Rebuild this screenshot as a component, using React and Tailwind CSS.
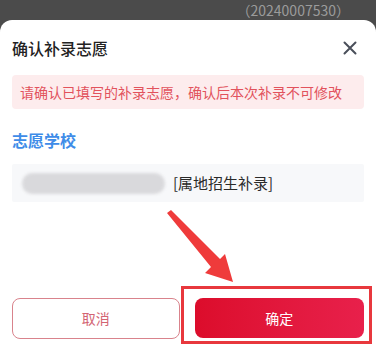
export default function App() {
  return (
    <div
      className="relative w-[376px] h-[347px] overflow-hidden bg-[#4b4b4b]"
      style={{ fontFamily: '"Noto Sans CJK SC", "Noto Sans", sans-serif' }}
    >
      {/* top strip behind the sheet */}
      <div className="h-[20px] flex justify-end pr-[26px]">
        <span className="text-[14px] leading-[20px] text-[#9b9b9b]">（20240007530）</span>
      </div>

      {/* SHEET */}
      <div className="h-[327px] bg-white rounded-t-[12px] px-[12px] flex flex-col">
        {/* HEADER */}
        <div className="h-[55px] flex items-center justify-between">
          <span className="text-[16px] font-medium text-[#222]">确认补录志愿</span>
          <svg width="14" height="14" viewBox="0 0 14 14" className="mr-[7px]">
            <path d="M1.5 1.5 L12.5 12.5 M12.5 1.5 L1.5 12.5" stroke="#4a4f5a" strokeWidth="2" strokeLinecap="round" />
          </svg>
        </div>

        {/* ALERT */}
        <div className="h-[34px] rounded-[4px] bg-[#fdeced] flex items-center px-[8px]">
          <span className="text-[14px] text-[#e2525c] whitespace-nowrap">请确认已填写的补录志愿，确认后本次补录不可修改</span>
        </div>

        {/* SCHOOL */}
        <div className="mt-[19px] h-[24px] flex items-center text-[16px] font-bold text-[#3e8ce8]">志愿学校</div>
        <div className="mt-[12px] h-[38px] bg-[#f7f8fa] rounded-[2px] flex items-center pl-[10px]">
          <div className="w-[143px] h-[21px] rounded-full bg-[#d9d9dc] blur-[1.5px]" />
          <span className="ml-[8px] text-[15px] text-[#2a2a2a]">[属地招生补录]</span>
        </div>

        {/* FOOTER */}
        <div className="mt-[96px] flex gap-[15px]">
          <button className="w-[168px] h-[41px] rounded-[8px] border border-[#d9838c] text-[14px] text-[#d36473] bg-white">
            取消
          </button>
          <button className="w-[170px] h-[40px] rounded-[8px] text-[14px] text-white bg-gradient-to-r from-[#dc0c2b] to-[#e8204b]">
            确定
          </button>
        </div>
      </div>

      {/* annotation: red outline */}
      <div className="absolute left-[181px] top-[286px] w-[191px] h-[58px] border-[3px] border-[#e8383d]" />

      {/* annotation: arrow */}
      <svg className="absolute left-0 top-0" width="376" height="347" viewBox="0 0 376 347">
        <polygon
          points="171,210 220,259 225,254 233,282 205,273 211,267 167,213"
          fill="#ef3b3b"
        />
      </svg>
    </div>
  );
}
